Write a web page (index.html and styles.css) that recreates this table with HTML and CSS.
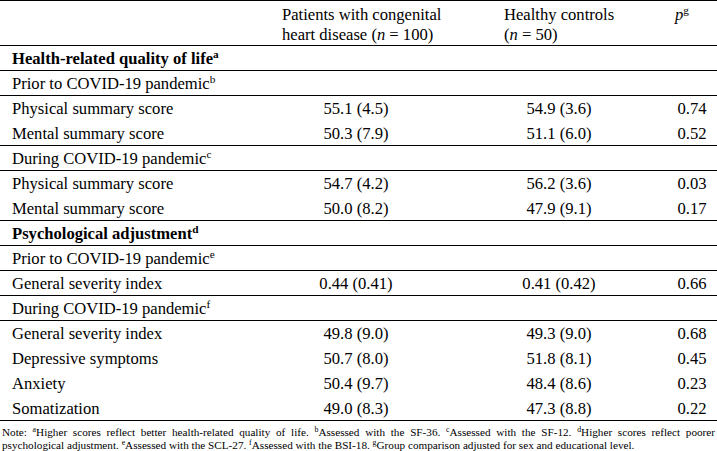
FILE: index.html
```html
<!DOCTYPE html>
<html>
<head>
<meta charset="utf-8">
<link rel="stylesheet" href="styles.css">
</head>
<body>
<div class="tbl">
  <div class="row head">
    <div class="c1"></div>
    <div class="c2 h">Patients with congenital<br>heart disease (<i>n</i> = 100)</div>
    <div class="c3 h">Healthy controls<br>(<i>n</i> = 50)</div>
    <div class="c4 h"><i>p</i><sup>g</sup></div>
  </div>
  <div class="row rule"><div class="c1 sec">Health-related quality of life<sup>a</sup></div></div>
  <div class="row rule"><div class="c1">Prior to COVID-19 pandemic<sup>b</sup></div></div>
  <div class="row"><div class="c1">Physical summary score</div><div class="c2 d">55.1 (4.5)</div><div class="c3 d">54.9 (3.6)</div><div class="c4 d">0.74</div></div>
  <div class="row rule"><div class="c1">Mental summary score</div><div class="c2 d">50.3 (7.9)</div><div class="c3 d">51.1 (6.0)</div><div class="c4 d">0.52</div></div>
  <div class="row rule"><div class="c1">During COVID-19 pandemic<sup>c</sup></div></div>
  <div class="row"><div class="c1">Physical summary score</div><div class="c2 d">54.7 (4.2)</div><div class="c3 d">56.2 (3.6)</div><div class="c4 d">0.03</div></div>
  <div class="row rule"><div class="c1">Mental summary score</div><div class="c2 d">50.0 (8.2)</div><div class="c3 d">47.9 (9.1)</div><div class="c4 d">0.17</div></div>
  <div class="row rule"><div class="c1 sec">Psychological adjustment<sup>d</sup></div></div>
  <div class="row rule"><div class="c1">Prior to COVID-19 pandemic<sup>e</sup></div></div>
  <div class="row rule"><div class="c1">General severity index</div><div class="c2 d">0.44 (0.41)</div><div class="c3 d">0.41 (0.42)</div><div class="c4 d">0.66</div></div>
  <div class="row rule"><div class="c1">During COVID-19 pandemic<sup>f</sup></div></div>
  <div class="row"><div class="c1">General severity index</div><div class="c2 d">49.8 (9.0)</div><div class="c3 d">49.3 (9.0)</div><div class="c4 d">0.68</div></div>
  <div class="row"><div class="c1">Depressive symptoms</div><div class="c2 d">50.7 (8.0)</div><div class="c3 d">51.8 (8.1)</div><div class="c4 d">0.45</div></div>
  <div class="row"><div class="c1">Anxiety</div><div class="c2 d">50.4 (9.7)</div><div class="c3 d">48.4 (8.6)</div><div class="c4 d">0.23</div></div>
  <div class="row rule"><div class="c1">Somatization</div><div class="c2 d">49.0 (8.3)</div><div class="c3 d">47.3 (8.8)</div><div class="c4 d">0.22</div></div>
  <div class="note">
    <span class="note-line just">Note: <sup>a</sup>Higher scores reflect better health-related quality of life. <sup>b</sup>Assessed with the SF-36. <sup>c</sup>Assessed with the SF-12. <sup>d</sup>Higher scores reflect poorer</span>
    <span class="note-line">psychological adjustment. <sup>e</sup>Assessed with the SCL-27. <sup>f</sup>Assessed with the BSI-18. <sup>g</sup>Group comparison adjusted for sex and educational level.</span>
  </div>
</div>
</body>
</html>
```
FILE: styles.css
```css
html, body {
  margin: 0;
  padding: 0;
  background: #fff;
}
body {
  font-family: "Liberation Serif", "Times New Roman", serif;
  color: #000;
  font-size: 16.6px;
}
.tbl {
  width: 717px;
}
.row {
  display: grid;
  grid-template-columns: 276px 222px 162px 57px;
  height: 25px;
  box-sizing: border-box;
  padding-top: 3px;
  line-height: 20px;
}
.row.rule {
  border-bottom: 1px solid #000;
}
.row.head {
  height: 46px;
  border-top: 1px solid #000;
  border-bottom: 1px solid #000;
  padding-top: 4px;
}
.c1 {
  padding-left: 12px;
  white-space: nowrap;
}
.sec {
  font-weight: bold;
}
.h {
  padding-left: 6px;
  white-space: nowrap;
}
.c4.h {
  padding-left: 15px;
}
.d {
  text-align: center;
}
.c2.d {
  padding-right: 62px;
}
.c3.d {
  padding-right: 40px;
}
.c4.d {
  padding-left: 7px;
}
sup {
  font-size: 0.68em;
  line-height: 0;
  vertical-align: 0.5em;
}
.note {
  padding: 5px 2px 0 2px;
  font-size: 11.2px;
  line-height: 13px;
}
.note-line {
  display: block;
  white-space: nowrap;
}
.note-line.just {
  white-space: normal;
  text-align: justify;
  text-align-last: justify;
}
.note sup {
  font-size: 0.7em;
}
```
